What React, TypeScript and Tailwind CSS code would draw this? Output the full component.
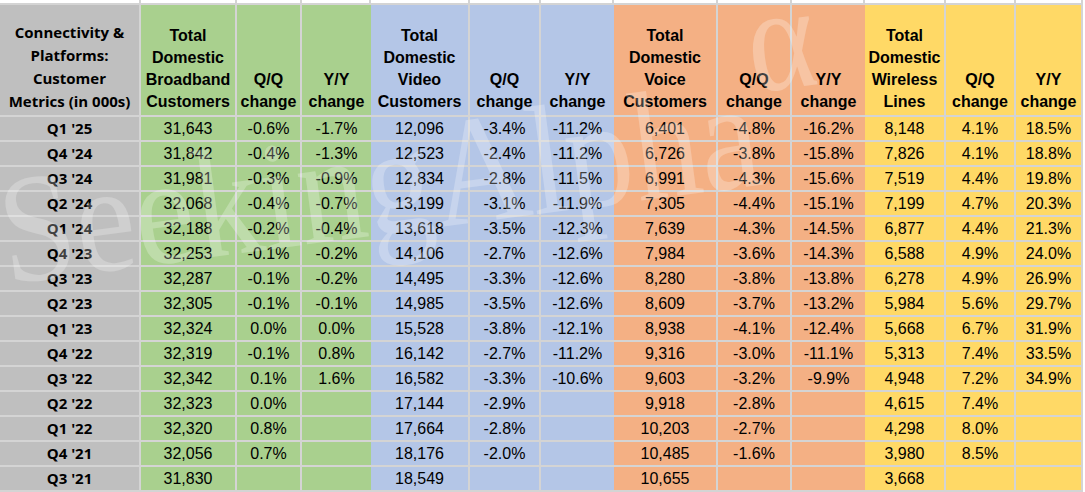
import React from "react";

const widths = [141, 96, 65, 69, 99, 71, 73, 104, 74, 73, 81, 70, 67];

// column fill + whether the column has a right grid line
const cols = [
  { bg: "bg-[#bfbfbf]", line: true },
  { bg: "bg-[#a9d08e]", line: true },
  { bg: "bg-[#a9d08e]", line: true },
  { bg: "bg-[#a9d08e]", line: false },
  { bg: "bg-[#b4c6e7]", line: true },
  { bg: "bg-[#b4c6e7]", line: true },
  { bg: "bg-[#b4c6e7]", line: false },
  { bg: "bg-[#f4b084]", line: true },
  { bg: "bg-[#f4b084]", line: true },
  { bg: "bg-[#f4b084]", line: false },
  { bg: "bg-[#ffd966]", line: true },
  { bg: "bg-[#ffd966]", line: true },
  { bg: "bg-[#ffd966]", line: true },
];

const headers: string[][] = [
  ["Connectivity &", "Platforms:", "Customer", "Metrics (in 000s)"],
  ["Total", "Domestic", "Broadband", "Customers"],
  ["Q/Q", "change"],
  ["Y/Y", "change"],
  ["Total", "Domestic", "Video", "Customers"],
  ["Q/Q", "change"],
  ["Y/Y", "change"],
  ["Total", "Domestic", "Voice", "Customers"],
  ["Q/Q", "change"],
  ["Y/Y", "change"],
  ["Total", "Domestic", "Wireless", "Lines"],
  ["Q/Q", "change"],
  ["Y/Y", "change"],
];

const rows: string[][] = [
  ["Q1 '25", "31,643", "-0.6%", "-1.7%", "12,096", "-3.4%", "-11.2%", "6,401", "-4.8%", "-16.2%", "8,148", "4.1%", "18.5%"],
  ["Q4 '24", "31,842", "-0.4%", "-1.3%", "12,523", "-2.4%", "-11.2%", "6,726", "-3.8%", "-15.8%", "7,826", "4.1%", "18.8%"],
  ["Q3 '24", "31,981", "-0.3%", "-0.9%", "12,834", "-2.8%", "-11.5%", "6,991", "-4.3%", "-15.6%", "7,519", "4.4%", "19.8%"],
  ["Q2 '24", "32,068", "-0.4%", "-0.7%", "13,199", "-3.1%", "-11.9%", "7,305", "-4.4%", "-15.1%", "7,199", "4.7%", "20.3%"],
  ["Q1 '24", "32,188", "-0.2%", "-0.4%", "13,618", "-3.5%", "-12.3%", "7,639", "-4.3%", "-14.5%", "6,877", "4.4%", "21.3%"],
  ["Q4 '23", "32,253", "-0.1%", "-0.2%", "14,106", "-2.7%", "-12.6%", "7,984", "-3.6%", "-14.3%", "6,588", "4.9%", "24.0%"],
  ["Q3 '23", "32,287", "-0.1%", "-0.2%", "14,495", "-3.3%", "-12.6%", "8,280", "-3.8%", "-13.8%", "6,278", "4.9%", "26.9%"],
  ["Q2 '23", "32,305", "-0.1%", "-0.1%", "14,985", "-3.5%", "-12.6%", "8,609", "-3.7%", "-13.2%", "5,984", "5.6%", "29.7%"],
  ["Q1 '23", "32,324", "0.0%", "0.0%", "15,528", "-3.8%", "-12.1%", "8,938", "-4.1%", "-12.4%", "5,668", "6.7%", "31.9%"],
  ["Q4 '22", "32,319", "-0.1%", "0.8%", "16,142", "-2.7%", "-11.2%", "9,316", "-3.0%", "-11.1%", "5,313", "7.4%", "33.5%"],
  ["Q3 '22", "32,342", "0.1%", "1.6%", "16,582", "-3.3%", "-10.6%", "9,603", "-3.2%", "-9.9%", "4,948", "7.2%", "34.9%"],
  ["Q2 '22", "32,323", "0.0%", "", "17,144", "-2.9%", "", "9,918", "-2.8%", "", "4,615", "7.4%", ""],
  ["Q1 '22", "32,320", "0.8%", "", "17,664", "-2.8%", "", "10,203", "-2.7%", "", "4,298", "8.0%", ""],
  ["Q4 '21", "32,056", "0.7%", "", "18,176", "-2.0%", "", "10,485", "-1.6%", "", "3,980", "8.5%", ""],
  ["Q3 '21", "31,830", "", "", "18,549", "", "", "10,655", "", "", "3,668", "", ""],
];

export default function App() {
  return (
    <div className="relative w-[1085px] h-[492px] overflow-hidden bg-white font-['Liberation_Sans',Arial,sans-serif] text-black">
      <div className="grid grid-cols-[141px_96px_65px_69px_99px_71px_73px_104px_74px_73px_81px_70px_67px]">
        {/* sliver of the row above */}
        {widths.map((_, i) => (
          <div key={"s" + i} className="h-[5px] bg-white border-r-2 border-b-2 border-[#d4d4d4]" />
        ))}

        {headers.map((lines, i) => (
          <div
            key={"h" + i}
            className={`h-[112px] flex flex-col justify-end items-center text-center pb-[2px] border-b-2 border-[#d4d4d4] ${cols[i].bg} ${
              cols[i].line ? "border-r-2" : ""
            } ${
              i === 0
                ? "font-['Open_Sans',sans-serif] font-bold text-[15px] leading-[23px]"
                : "font-bold text-[16px] leading-[22px]"
            }`}
          >
            {lines.map((l) => (
              <div key={l} className="whitespace-nowrap">
                {l}
              </div>
            ))}
          </div>
        ))}

        {rows.map((r, ri) =>
          r.map((v, ci) => (
            <div
              key={ri + "-" + ci}
              className={`h-[25px] flex items-center justify-center whitespace-nowrap border-b-2 border-[#d4d4d4] ${cols[ci].bg} ${
                cols[ci].line ? "border-r-2" : ""
              } ${
                ci === 0
                  ? "font-['Open_Sans',sans-serif] font-bold text-[15px]"
                  : "text-[16px]"
              }`}
            >
              {v}
            </div>
          ))
        )}
      </div>

      {/* watermark over the sheet */}
      <span className="pointer-events-none absolute left-[10px] top-[174px] origin-bottom-left -rotate-[7.5deg] scale-y-[1.15] whitespace-nowrap font-['Liberation_Serif',serif] text-[135px] leading-none text-white/25 select-none">
        SeekingAlpha
        <span className="relative -top-[80px] text-[130px]">α</span>
      </span>
    </div>
  );
}
